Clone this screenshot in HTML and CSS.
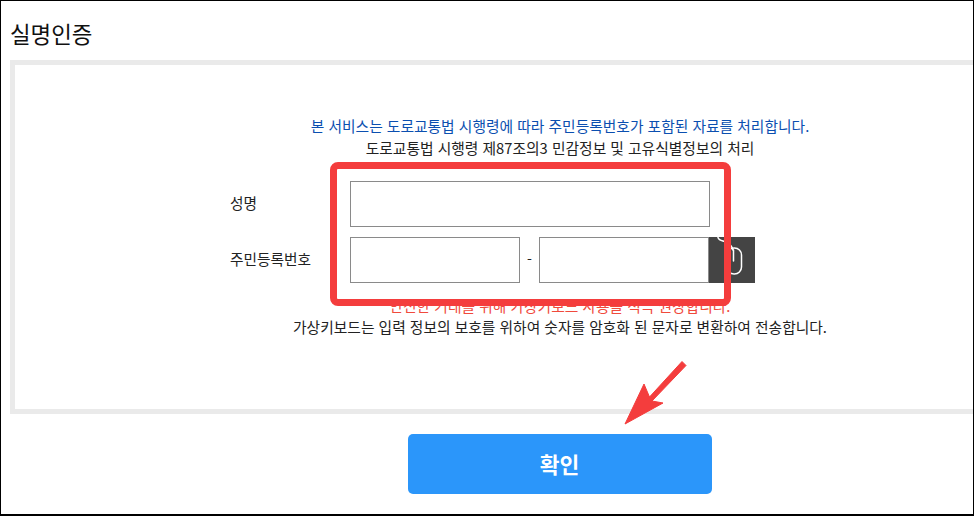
FILE: index.html
```html
<!DOCTYPE html>
<html lang="ko">
<head>
<meta charset="utf-8">
<title>실명인증</title>
<link rel="stylesheet" href="styles.css">
</head>
<body>
<div class="frame">
  <h1 class="title">실명인증</h1>
  <section class="panel">
    <div class="content">
      <p class="notice blue">본 서비스는 도로교통법 시행령에 따라 주민등록번호가 포함된 자료를 처리합니다.</p>
      <p class="notice legal">도로교통법 시행령 제87조의3 민감정보 및 고유식별정보의 처리</p>
      <div class="form">
        <div class="row">
          <label class="label">성명</label>
          <input class="input wide" type="text">
        </div>
        <div class="row">
          <label class="label">주민등록번호</label>
          <input class="input half" type="text">
          <span class="dash">-</span>
          <input class="input half" type="text">
          <button class="keypad" type="button" aria-label="가상키보드">
            <svg width="46" height="46" viewBox="0 0 46 46" fill="none" stroke="#fff" stroke-width="1.5" stroke-linecap="round">
              <path d="M9 0.5c1 3.500 5 3 8 4.500c4 2 6 3.500 7 8"/>
              <rect x="18" y="11" width="14.5" height="26" rx="7"/>
              <path d="M24.500 13v11"/>
            </svg>
          </button>
        </div>
      </div>
      <p class="notice red">안전한 거래를 위해 가상키보드 사용을 적극 권장합니다.</p>
      <p class="notice plain">가상키보드는 입력 정보의 보호를 위하여 숫자를 암호화 된 문자로 변환하여 전송합니다.</p>
    </div>
  </section>
  <div class="actions">
    <button class="confirm" type="button">확인</button>
  </div>
  <div class="highlight"></div>
  <svg class="arrow" width="70" height="70" viewBox="0 0 70 70">
    <path class="arrow-shape" d="M3 64L22 24L27.500 37L60 1.500L64 5.500L30 41L41 43Z"/>
  </svg>
</div>
</body>
</html>
```
FILE: styles.css
```css
* {
  box-sizing: border-box;
}

html,
body {
  margin: 0;
  padding: 0;
  background: #fff;
}

.frame {
  position: relative;
  width: 974px;
  height: 516px;
  overflow: hidden;
  border: 1px solid #000;
  border-bottom-width: 2px;
  font-family: "Noto Sans CJK KR", "Noto Sans", sans-serif;
  color: #222;
}

.title {
  margin: 0;
  padding: 16px 0 0 9px;
  height: 59px;
  font-size: 22.4px;
  line-height: 32px;
  font-weight: 400;
  color: #111;
}

.panel {
  margin-left: 9px;
  width: 970px;
  height: 354px;
  border: 5px solid #eaeaea;
}

.content {
  width: 660px;
  margin-left: 215px;
  padding-top: 50px;
}

.notice {
  margin: 0;
  font-size: 14.75px;
  line-height: 22px;
  text-align: center;
  white-space: nowrap;
}

.blue {
  color: #0b4fb0;
}

.red {
  color: #f04a3c;
  margin-top: 12px;
}

.plain {
  margin-top: -1px;
}

.form {
  margin-top: 22px;
  display: flex;
  flex-direction: column;
  gap: 10px;
}

.row {
  display: flex;
  align-items: center;
  height: 46px;
}

.label {
  width: 120px;
  padding-bottom: 3px;
  font-size: 14.7px;
  color: #222;
}

.input {
  height: 46px;
  padding: 0;
  border: 1px solid #8a8a8a;
  background: #fff;
  border-radius: 0;
}

.wide {
  width: 360px;
}

.half {
  width: 170px;
}

.dash {
  width: 19px;
  padding-bottom: 2px;
  text-align: center;
  font-size: 14px;
}

.keypad {
  width: 46px;
  height: 46px;
  padding: 0;
  border: 0;
  background: #444;
  display: block;
}

.keypad svg {
  display: block;
}

.actions {
  display: flex;
  justify-content: center;
  margin-top: 20px;
  padding-left: 145px;
}

.confirm {
  width: 304px;
  height: 60px;
  padding-bottom: 2px;
  border: 0;
  border-radius: 5px;
  background: #2b96fa;
  color: #fff;
  font-family: inherit;
  font-size: 21.5px;
  font-weight: 700;
}

.highlight {
  position: absolute;
  left: 329px;
  top: 161px;
  width: 401px;
  height: 144px;
  border: 7px solid #f43d3d;
  border-radius: 8px;
}

.arrow {
  position: absolute;
  left: 621px;
  top: 359px;
  overflow: visible;
}

.arrow-shape {
  fill: #f43d3d;
  stroke: #f43d3d;
  stroke-width: 1;
  stroke-linejoin: round;
}
```
